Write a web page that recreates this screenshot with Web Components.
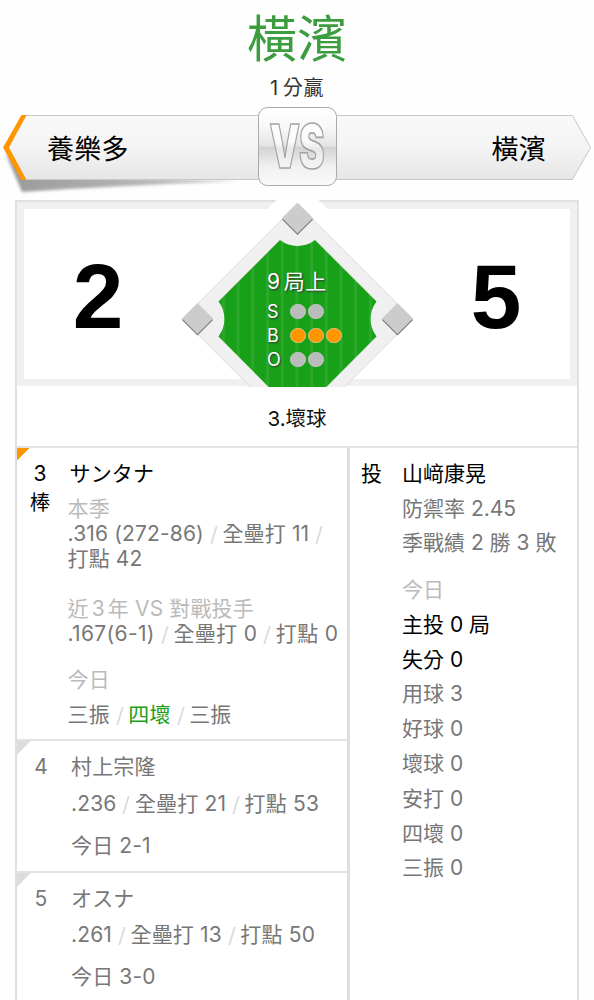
<!DOCTYPE html>
<html lang="zh-Hant">
<head>
<meta charset="utf-8">
<title>養樂多 VS 橫濱</title>
<style>
  body {
    margin: 0;
    background: #fefefe;
    font-family: Inter, "Noto Sans CJK TC", sans-serif;
    font-size: 21px;
    font-weight: 385;
    color: #777;
    height: 1000px;
    overflow: hidden;
  }
</style>
</head>
<body>
<game-page>
  <game-result slot="result" winner="橫濱"><i>1</i>分贏</game-result>
  <match-banner slot="banner">
    <span slot="away">養樂多</span>
    <span slot="home">橫濱</span>
  </match-banner>
  <score-board slot="score" away="2" home="5">
    <ball-field inning="9" half="局上" strikes="0" balls="3" outs="0"></ball-field>
  </score-board>
  <span slot="event">3.壞球</span>

  <batter-card slot="batters" active order="3" suffix="棒" name="サンタナ">
    <stat-line tone="label" style="--h:25px">本季</stat-line>
    <stat-line style="--h:25px">.316 (272-86)<s></s>全壘打 11<s></s></stat-line>
    <stat-line style="--h:25px">打點 42</stat-line>
    <stat-line tone="label" style="--h:25px;--top:25px">近<i>3</i>年 VS 對戰投手</stat-line>
    <stat-line style="--h:25px;letter-spacing:.35px">.167(6-1)<s></s>全壘打 0<s></s>打點 0</stat-line>
    <stat-line tone="label" style="--h:35px;--top:16px">今日</stat-line>
    <stat-line style="--h:35px">三振<s></s><b>四壞</b><s></s>三振</stat-line>
  </batter-card>
  <batter-card slot="batters" order="4" name="村上宗隆">
    <stat-line style="--h:42px">.236<s></s>全壘打 21<s></s>打點 53</stat-line>
    <stat-line style="--h:42px">今日 2-1</stat-line>
  </batter-card>
  <batter-card slot="batters" order="5" name="オスナ">
    <stat-line style="--h:42px">.261<s></s>全壘打 13<s></s>打點 50</stat-line>
    <stat-line style="--h:42px">今日 3-0</stat-line>
  </batter-card>

  <pitcher-card slot="pitcher" role-name="投" name="山﨑康晃">
    <stat-line>防禦率 2.45</stat-line>
    <stat-line>季戰績 2 勝 3 敗</stat-line>
    <stat-line tone="label" style="--top:12px">今日</stat-line>
    <stat-line tone="strong">主投 0 局</stat-line>
    <stat-line tone="strong">失分 0</stat-line>
    <stat-line>用球 3</stat-line>
    <stat-line>好球 0</stat-line>
    <stat-line>壞球 0</stat-line>
    <stat-line>安打 0</stat-line>
    <stat-line>四壞 0</stat-line>
    <stat-line>三振 0</stat-line>
  </pitcher-card>
</game-page>

<script>
class GamePage extends HTMLElement {
  constructor() {
    super();
    this.attachShadow({ mode: 'open' }).innerHTML = `
      <style>
        :host { display: block; width: 594px; }
        .panel { margin: 14px 15px 0; border: 2px solid #e0e0e0; border-bottom: 0; height: 798px; background: #fff; display: flex; flex-direction: column; }
        .event { height: 60px; line-height: 66px; text-align: center; color: #111; font-size: 20.5px; border-bottom: 2px solid #e2e2e2; }
        .columns { flex: 1; display: grid; grid-template-columns: 330px 1fr; }
        .pitcher { border-left: 3px solid #dedede; }
      </style>
      <slot name="result"></slot>
      <slot name="banner"></slot>
      <div class="panel">
        <slot name="score"></slot>
        <div class="event"><slot name="event"></slot></div>
        <div class="columns">
          <div><slot name="batters"></slot></div>
          <div class="pitcher"><slot name="pitcher"></slot></div>
        </div>
      </div>
    `;
  }
}

class GameResult extends HTMLElement {
  connectedCallback() {
    this.attachShadow({ mode: 'open' }).innerHTML = `
      <style>
        :host { display: block; height: 107px; text-align: center; }
        h1 { margin: 0; padding-top: 4px; font-size: 50px; line-height: 70px; font-weight: 385; color: #3c9d3f; }
        p { margin: 0; font-size: 20px; line-height: 28px; color: #333; letter-spacing: .7px; }
        ::slotted(i) { font-style: normal; margin-right: 4px; }
      </style>
      <h1>${this.getAttribute('winner')}</h1>
      <p><slot></slot></p>
    `;
  }
}

class MatchBanner extends HTMLElement {
  constructor() {
    super();
    this.attachShadow({ mode: 'open' }).innerHTML = `
      <style>
        :host { display: grid; height: 79px; font-size: 27px; color: #000; }
        svg, .teams { grid-area: 1 / 1; }
        svg { display: block; overflow: visible; }
        .teams { display: flex; justify-content: space-between; padding: 0 48px 0 47px; line-height: 85px; letter-spacing: .3px; }
      </style>
      <svg width="594" height="79" viewBox="0 107 594 79">
        <defs>
          <linearGradient id="bar" x1="0" y1="0" x2="0" y2="1">
            <stop offset="0" stop-color="#f9f9f9"/><stop offset=".5" stop-color="#f4f4f4"/><stop offset="1" stop-color="#e6e6e6"/>
          </linearGradient>
          <linearGradient id="badge" x1="0" y1="0" x2="0" y2="1">
            <stop offset="0" stop-color="#fff"/><stop offset=".25" stop-color="#f8f8f8"/><stop offset=".49" stop-color="#e4e4e4"/><stop offset=".51" stop-color="#d2d2d2"/><stop offset=".75" stop-color="#f0f0f0"/><stop offset="1" stop-color="#fafafa"/>
          </linearGradient>
          <linearGradient id="letter" x1="0" y1="0" x2="0" y2="1">
            <stop offset="0" stop-color="#fff"/><stop offset=".45" stop-color="#fafafa"/><stop offset=".55" stop-color="#e8e8e8"/><stop offset="1" stop-color="#fff"/>
          </linearGradient>
          <linearGradient id="fade" x1="0" x2="1">
            <stop offset="0" stop-color="#888" stop-opacity=".85"/><stop offset="1" stop-color="#888" stop-opacity=".45"/>
          </linearGradient>
          <filter id="blur" x="-10%" y="-40%" width="120%" height="180%"><feGaussianBlur stdDeviation="1.8"/></filter>
        </defs>
        <path d="M5 152 L22 192 Q110 186 240 181 L26 176 Z" fill="url(#fade)" filter="url(#blur)"/>
        <path d="M26 115.500 H572.500 L590.500 147.500 L572.500 179.500 H26 L7 147.500 Z" fill="url(#bar)" stroke="#c8c8c8"/>
        <path d="M21.500 115 H26.500 L9 147.500 L26.500 180 H21.500 L3 147.500 Z" fill="#ff9600"/>
        <rect x="258.500" y="107.500" width="78" height="78" rx="9" fill="url(#badge)" stroke="#aaa"/>
        <text transform="translate(269.500 167.500) scale(.63 1)" font-family="Inter, sans-serif" font-weight="900" font-size="61" letter-spacing="-1.500" fill="url(#letter)" stroke="#a2a2a2" stroke-width="1.700">VS</text>
      </svg>
      <div class="teams"><slot name="away"></slot><slot name="home"></slot></div>
    `;
  }
}

class ScoreBoard extends HTMLElement {
  connectedCallback() {
    this.attachShadow({ mode: 'open' }).innerHTML = `
      <style>
        :host { display: grid; grid-template-columns: 1fr 236px 1fr; height: 184px; box-sizing: border-box; border: solid #f0f0f0; border-width: 7px; }
        .score { font: 700 91px/175px "Liberation Sans", sans-serif; color: #000; text-align: center; }
        .away { padding-right: 7px; }
        .home { padding-left: 7px; }
      </style>
      <div class="score away">${this.getAttribute('away')}</div>
      <slot></slot>
      <div class="score home">${this.getAttribute('home')}</div>
    `;
  }
}

class BallField extends HTMLElement {
  dots(filled, total) {
    let out = '';
    for (let i = 0; i < total; i++) out += `<span class="${i < filled ? 'on' : ''}"></span>`;
    return out;
  }

  connectedCallback() {
    const at = (name) => this.getAttribute(name);
    const base = (x, y) => `
      <g transform="translate(${x} ${y})">
        <path d="M0 -14.500 L15.500 1 L0 16.500 L-15.500 1 Z" fill="#777"/>
        <path d="M0 -16 L15.500 -.5 L0 15 L-15.500 -.5 Z" fill="#ccc"/>
      </g>`;
    this.attachShadow({ mode: 'open' }).innerHTML = `
      <style>
        :host { display: grid; width: 236px; height: 186px; margin-top: -9px; color: #fff; text-shadow: 1px 1px 2px #333; }
        svg, .board { grid-area: 1 / 1; }
        svg { display: block; }
        .board { padding: 67px 0 0 88px; }
        .inning { line-height: 30px; font-size: 21px; display: flex; gap: 3.5px; height: 32.5px; letter-spacing: .3px; }
        .count { display: flex; align-items: center; height: 24px; font-size: 18px; gap: 2.5px; }
        .count b { font-weight: 385; width: 20.5px; }
        .count span { width: 15.5px; height: 15.5px; box-sizing: border-box; border-radius: 50%; background: #bbb; border: 1px solid #c6c6c6; }
        .count span.on { background: #ff9600; border-color: #e3c480; }
      </style>
      <svg width="236" height="187" viewBox="179 200 236 187">
        <defs>
          <pattern id="grass" x="266" width="14.700" height="20" patternUnits="userSpaceOnUse">
            <rect width="14.700" height="20" fill="#18a018"/><rect width="3" height="20" fill="#2ba82b"/>
          </pattern>
        </defs>
        <path d="M297.500 179 L437.500 319 L377.500 379 H217.500 L157.500 319 Z" fill="#fff"/>
        <path d="M297.500 204 L412.500 319 L297.500 434 L182.500 319 Z" fill="#f0f0f0" stroke="#d8d8d8"/>
        <path d="M280 240 A29 29 0 0 0 315 240 L376.500 301.500 A29 29 0 0 0 376.500 336.500 L297.500 416 L218.500 336.500 A29 29 0 0 0 218.500 301.500 Z" fill="url(#grass)"/>
        ${base(297.5, 218.5)}${base(197.5, 319)}${base(397.5, 319)}
      </svg>
      <div class="board">
        <div class="inning"><span>${at('inning')}</span><span>${at('half')}</span></div>
        <div class="count"><b>S</b>${this.dots(+at('strikes'), 2)}</div>
        <div class="count"><b>B</b>${this.dots(+at('balls'), 3)}</div>
        <div class="count"><b>O</b>${this.dots(+at('outs'), 2)}</div>
      </div>
    `;
  }
}

class BatterCard extends HTMLElement {
  connectedCallback() {
    const suffix = this.getAttribute('suffix');
    this.attachShadow({ mode: 'open' }).innerHTML = `
      <style>
        :host { display: grid; grid-template-columns: 46px 1fr; box-sizing: border-box; height: 131.5px; padding-top: 5px; border-top: 2px solid #e2e2e2; background: linear-gradient(135deg, #dcdcdc 9.500px, transparent 10px); }
        :host([active]) { height: 291px; border-top: 0; padding-top: 5px; color: #000; background: linear-gradient(135deg, #ff9600 8.500px, transparent 9px); }
        .order { text-align: center; line-height: 42px; padding-left: 2px; }
        :host([active]) .order { line-height: 29px; padding-top: 6px; padding-left: 0; }
        .order div:nth-child(2) { font-size: 20.5px; }
        .body { padding-left: 8px; white-space: nowrap; letter-spacing: .15px; }
        .name { line-height: 42px; height: 36.5px; }
        :host([active]) .body { padding-left: 4.5px; }
        :host([active]) .name { padding-left: 2px; height: 42.5px; }
      </style>
      <div class="order"><div>${this.getAttribute('order')}</div>${suffix ? `<div>${suffix}</div>` : ''}</div>
      <div class="body">
        <div class="name">${this.getAttribute('name')}</div>
        <slot></slot>
      </div>
    `;
  }
}

class PitcherCard extends HTMLElement {
  connectedCallback() {
    this.attachShadow({ mode: 'open' }).innerHTML = `
      <style>
        :host { display: grid; grid-template-columns: 41px 1fr; padding: 8px 0 0 11px; white-space: nowrap; --h: 34.8px; }
        .role, .name { color: #000; line-height: 35.5px; }
      </style>
      <div class="role">${this.getAttribute('role-name')}</div>
      <div>
        <div class="name">${this.getAttribute('name')}</div>
        <slot></slot>
      </div>
    `;
  }
}

// one row of stats; <s> is a divider slash, <b> a highlighted result
class StatLine extends HTMLElement {
  constructor() {
    super();
    this.attachShadow({ mode: 'open' }).innerHTML = `
      <style>
        :host { display: block; height: var(--h); line-height: var(--h); margin-top: var(--top, 0); color: #777; }
        :host([tone=label]) { color: #bbb; }
        :host([tone=strong]) { color: #000; }
        ::slotted(i) { font-style: normal; margin: 0 3px; }
        ::slotted(b) { font-weight: 385; color: #18a018; }
        ::slotted(s) { display: inline-block; width: 1.5px; height: 18px; margin: 0 8px 0 9px; background: #ddd; transform: skewX(-17deg); vertical-align: -3px; }
      </style>
      <slot></slot>
    `;
  }
}

customElements.define('game-page', GamePage);
customElements.define('game-result', GameResult);
customElements.define('match-banner', MatchBanner);
customElements.define('score-board', ScoreBoard);
customElements.define('ball-field', BallField);
customElements.define('batter-card', BatterCard);
customElements.define('pitcher-card', PitcherCard);
customElements.define('stat-line', StatLine);
</script>
</body>
</html>
